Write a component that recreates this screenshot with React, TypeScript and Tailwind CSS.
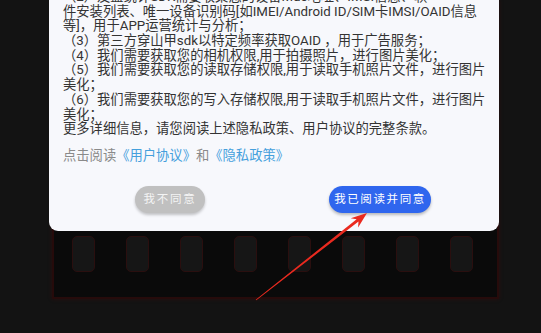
import React from "react";

const lines = [
  "（2）友盟统计SDK需要收集您的设备Mac地址、IMSI信息、软",
  "件安装列表、唯一设备识别码[如IMEI/Android ID/SIM卡IMSI/OAID信息",
  "等]，用于APP运营统计与分析；",
  "（3）第三方穿山甲sdk以特定频率获取OAID ，用于广告服务；",
  "（4）我们需要获取您的相机权限,用于拍摄照片，进行图片美化；",
  "（5）我们需要获取您的读取存储权限,用于读取手机照片文件，进行图片",
  "美化；",
  "（6）我们需要获取您的写入存储权限,用于读取手机照片文件，进行图片",
  "美化；",
  "更多详细信息，请您阅读上述隐私政策、用户协议的完整条款。",
];

export default function App() {
  return (
    <div
      className="relative w-[541px] h-[333px] overflow-hidden bg-[#131313]"
      style={{ fontFamily: "Roboto, 'Noto Sans CJK SC', sans-serif" }}
    >
      {/* film strip background */}
      <div className="ml-[52px] w-[447px] h-[299px] bg-[#0a0a0a] border-l-2 border-r-2 border-b-2 border-[#260b0b] shadow-[0_0_4px_rgba(90,10,10,0.35)] flex flex-col justify-end pb-[25px]">
        <div className="flex pl-[18px] gap-[31px]">
          {Array.from({ length: 8 }).map((_, i) => (
            <div
              key={i}
              className="w-[23px] h-[36px] rounded-[5px] bg-[#161616] border border-[#2a0f0f]"
            />
          ))}
        </div>
      </div>

      {/* dialog */}
      <div className="absolute left-[49px] top-[-40px] w-[450px] h-[271px] bg-[#f7f8fc] rounded-[9px] flex flex-col">
        <div className="pt-[30px] pl-[14px] text-[13.3px] text-[#333333]">
          {lines.map((l, i) => (
            <div key={i} className="h-[14.7px] leading-[14.7px] whitespace-nowrap">
              {l}
            </div>
          ))}
        </div>
        <div className="mt-[11px] h-[16px] pl-[14px] text-[13.3px] leading-[16px] text-[#8a8a8a] whitespace-nowrap">
          点击阅读<span className="text-[#45a0dc]">《用户协议》</span>和
          <span className="text-[#45a0dc]">《隐私政策》</span>
        </div>
        <div className="mt-[22px] flex pl-[86px] gap-[124px]">
          <div className="w-[70px] h-[27px] rounded-full bg-[#c0c0c0] text-[#f4f4f4] text-[11.5px] tracking-[1.8px] flex items-center justify-center shadow-[0_2px_3px_rgba(0,0,0,0.22)]">
            我不同意
          </div>
          <div className="w-[102px] h-[27px] rounded-full bg-[#2f66ee] text-white text-[11.5px] tracking-[1.6px] flex items-center justify-center shadow-[0_2px_3px_rgba(0,0,0,0.25)]">
            我已阅读并同意
          </div>
        </div>
      </div>

      {/* red arrow */}
      <svg
        className="absolute left-0 top-0 pointer-events-none"
        width="541"
        height="333"
        viewBox="0 0 541 333"
      >
        <polygon
          fill="#ea2a1f"
          points="256.3,300.3 358.49,221.58 358.11,227.59 367,213 350.71,218.15 356.63,219.22 255.7,299.7"
        />
      </svg>
    </div>
  );
}
